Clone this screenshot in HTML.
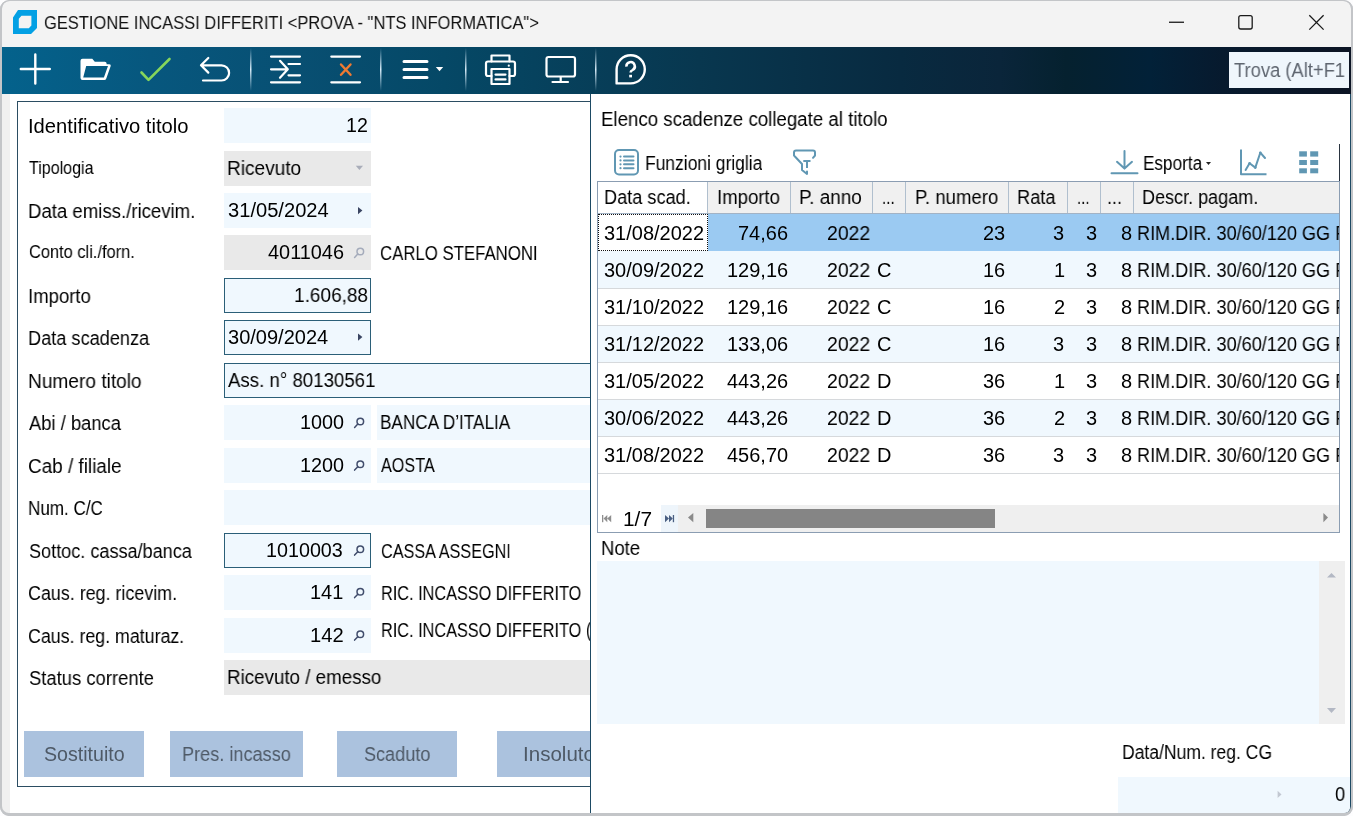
<!DOCTYPE html>
<html><head><meta charset="utf-8">
<style>
html,body{margin:0;padding:0;}
body{width:1353px;height:816px;position:relative;overflow:hidden;background:#fdfdfe;font-family:"Liberation Sans",sans-serif;color:#000;}
.a{position:absolute;}
.t{position:absolute;white-space:pre;transform-origin:0 0;display:block;will-change:transform;}
.clip{position:absolute;overflow:hidden;}
svg{position:absolute;overflow:visible;}
</style></head><body>
<!-- window frame -->
<div class="a" style="left:0;top:0;width:1353px;height:816px;background:#c3c5c8;border-radius:9px;"></div>
<div class="a" style="left:2px;top:1px;width:1349px;height:813px;background:#f3f3f3;border-radius:8px 8px 7px 7px;overflow:hidden;">
</div>
<!-- app icon -->
<svg style="left:0;top:0" width="60" height="46">
  <path d="M13 17.5 L18 10 L37 10 L37 28 L31 34 L13 34 Z M18.8 18.8 L18.8 28.3 L28.8 28.3 L31.4 25.6 L31.4 15.7 L21.5 15.7 Z" fill="#03a0e4" fill-rule="evenodd"/>
</svg>
<!-- window controls -->
<svg style="left:0;top:0" width="1353" height="46">
  <rect x="1169" y="21.6" width="15" height="1.3" fill="#1a1a1a"/>
  <rect x="1238.8" y="15.6" width="13.4" height="13.4" rx="2" fill="none" stroke="#1a1a1a" stroke-width="1.3"/>
  <path d="M1309.3 15.3 L1323.6 29.6 M1323.6 15.3 L1309.3 29.6" stroke="#1a1a1a" stroke-width="1.3"/>
</svg>
<!-- toolbar -->
<div class="a" style="left:2px;top:47px;width:1349px;height:47px;background:linear-gradient(90deg,#04628c 0%,#07577e 11%,#084f72 22.1%,#054866 32.8%,#08374f 51.7%,#082a40 66.6%,#0a253a 74%,#05212f 78.9%,#022138 85.1%,#071a2e 90.4%,#0c1424 100%);"></div>
<svg style="left:0;top:0" width="1353" height="100">
  <defs>
    <linearGradient id="sep" x1="0" y1="0" x2="0" y2="1">
      <stop offset="0" stop-color="#cfe6f5" stop-opacity="0"/>
      <stop offset="0.5" stop-color="#d8ecf8" stop-opacity="1"/>
      <stop offset="1" stop-color="#cfe6f5" stop-opacity="0"/>
    </linearGradient>
  </defs>
  <g fill="url(#sep)">
    <rect x="250" y="48" width="1.5" height="43"/>
    <rect x="380" y="48" width="1.5" height="43"/>
    <rect x="465" y="48" width="1.5" height="43"/>
    <rect x="595" y="48" width="1.5" height="43"/>
  </g>
  <g stroke="#fff" fill="none" stroke-width="2.2" stroke-linecap="round" stroke-linejoin="round">
    <!-- plus -->
    <path d="M35.3 54.5 V83.5 M20.8 69 H49.8" stroke-width="2.4"/>
    <!-- folder -->

    <!-- undo -->
    <path d="M208.3 58 L201 65.3 L208.3 72.6 M201.5 65.3 H221.5 A7.6 7.6 0 0 1 221.5 80.5 H203"/>
    <!-- indent -->
    <path d="M271 56.6 H300 M271 82.3 H300 M288.5 64 H300 M288.5 75.3 H300 M271 69.3 H287 M280 60.8 L287.8 69.3 L280 77.8"/>
    <!-- delete lines -->
    <path d="M331.3 56.6 H360 M331.3 82.3 H360"/>
    <!-- menu -->
    <path d="M404 61.5 H427 M404 69.6 H427 M404 77.5 H427" stroke-width="3"/>
    <!-- printer -->
    <path d="M491.5 61.5 V55.5 H509.5 V61.5"/>
    <path d="M491.5 76 H488 Q486 76 486 74 V63.5 Q486 61.5 488 61.5 H513 Q515 61.5 515 63.5 V74 Q515 76 513 76 H509.5"/>
    <path d="M491.5 69 H509.5 V84 H491.5 Z M495.5 74.6 H505.5 M495.5 79.4 H505.5"/>
    <!-- monitor -->
    <rect x="546.5" y="57" width="28.5" height="19.5" rx="2"/>
    <path d="M560.7 77 V82 M552.5 82 H568"/>
    <!-- help -->
    <path d="M616.6 83.4 V69.3 A14.1 14.1 0 1 1 630.7 83.4 Z" stroke-width="2.4"/>
    <path d="M626.4 66.6 A4.2 4.2 0 1 1 632.6 70 Q630.6 71 630.6 72.6" stroke-width="2.5" stroke-linecap="butt"/>
  </g>
  <circle cx="508.8" cy="65.7" r="1.1" fill="#fff"/>
  <path fill="#fff" fill-rule="evenodd" d="M80.5 60.8 Q80.5 58.8 82.5 58.8 L92.3 58.8 L94.8 61.7 L104.8 61.7 Q106.6 61.7 106.6 63.5 L106.6 64.2 L109.3 64.2 Q111.2 64.2 110.7 66 L106.3 78.6 Q105.8 80.1 104.3 80.1 L82.5 80.1 Q80.5 80.1 80.5 78.1 Z M86.2 66.1 L108 66.1 L103.9 77.6 L83.2 77.6 Z"/>
  <rect x="629.2" y="74.8" width="2.8" height="2.6" fill="#fff"/>
  <path d="M435.8 67 H443.2 L439.5 71.2 Z" fill="#fff"/>
  <path d="M141.5 72.5 L148.5 79.8 L169.5 59" stroke="#86d65b" stroke-width="2.6" fill="none" stroke-linecap="round" stroke-linejoin="round"/>
  <path d="M341 64.5 L350.5 74.8 M350.5 64.5 L341 74.8" stroke="#ef7a32" stroke-width="2.4" fill="none" stroke-linecap="round"/>
</svg>
<!-- Trova box -->
<div class="a" style="left:1229px;top:52px;width:120px;height:36px;background:#eff6fc;"></div>
<div class="clip" style="left:1229px;top:52px;width:116px;height:36px;"><div class="a" style="left:-1229px;top:-52px;width:1353px;height:816px;">
<span class="t" style="left:1233.50px;top:61px;font-size:19.6px;line-height:19.6px;transform:scaleX(0.9371);color:#5f6670;">Trova (Alt+F1)</span>
</div></div>

<!-- content area -->
<div class="a" style="left:2px;top:94px;width:8px;height:719px;background:#f0f0f0;"></div>
<div class="a" style="left:10px;top:94px;width:580px;height:719px;background:#fff;"></div>
<!-- group box -->
<div class="a" style="left:17px;top:101px;width:600px;height:686px;border:1px solid #2b4d62;box-sizing:border-box;"></div>

<!-- fields -->
<div id="fields">
<div class="a" style="left:224px;top:108px;width:147px;height:35px;background:#f0f8fe;"></div>
<div class="a" style="left:224px;top:151px;width:147px;height:35px;background:#e9e9e9;"></div>
<div class="a" style="left:224px;top:193px;width:147px;height:35px;background:#f0f8fe;"></div>
<div class="a" style="left:224px;top:235px;width:147px;height:35px;background:#e9e9e9;"></div>
<div class="a" style="left:224px;top:278px;width:147px;height:35px;background:#f0f8fe;border:1px solid #2b5f78;box-sizing:border-box;"></div>
<div class="a" style="left:224px;top:320px;width:147px;height:35px;background:#f0f8fe;border:1px solid #2b5f78;box-sizing:border-box;"></div>
<div class="a" style="left:224px;top:363px;width:400px;height:35px;background:#f0f8fe;border:1px solid #2b5f78;box-sizing:border-box;"></div>
<div class="a" style="left:224px;top:405px;width:147px;height:35px;background:#f0f8fe;"></div>
<div class="a" style="left:377px;top:405px;width:240px;height:35px;background:#f0f8fe;"></div>
<div class="a" style="left:224px;top:448px;width:147px;height:35px;background:#f0f8fe;"></div>
<div class="a" style="left:377px;top:448px;width:240px;height:35px;background:#f0f8fe;"></div>
<div class="a" style="left:224px;top:490px;width:400px;height:35px;background:#f0f8fe;"></div>
<div class="a" style="left:224px;top:533px;width:147px;height:35px;background:#f0f8fe;border:1px solid #2b5f78;box-sizing:border-box;"></div>
<div class="a" style="left:224px;top:575px;width:147px;height:35px;background:#f0f8fe;"></div>
<div class="a" style="left:224px;top:618px;width:147px;height:35px;background:#f0f8fe;"></div>
<div class="a" style="left:224px;top:660px;width:400px;height:35px;background:#e9e9e9;"></div>
</div>
<!-- buttons -->
<div class="a" style="left:24px;top:731px;width:120px;height:46px;background:#abc2de;"></div>
<div class="a" style="left:170px;top:731px;width:133px;height:46px;background:#abc2de;"></div>
<div class="a" style="left:337px;top:731px;width:120px;height:46px;background:#abc2de;"></div>
<div class="a" style="left:497px;top:731px;width:120px;height:46px;background:#abc2de;"></div>
<!-- field icons -->
<svg style="left:0;top:0" width="600" height="816">
  <path d="M355.8 165.8 H363 L359.4 170 Z" fill="#a9adb9"/>
  <path d="M358 207 L362.4 210.6 L358 214.2 Z" fill="#3a4562"/>
  <path d="M358 333.5 L362.4 337.1 L358 340.7 Z" fill="#3a4562"/>
  <g fill="none" stroke-width="1.5" stroke-linecap="round">
    <g stroke="#a4abbb"><circle cx="360.3" cy="251.5" r="3.3"/><path d="M357.8 254 L354.6 257.4"/></g>
    <g stroke="#414d6c">
      <circle cx="360.3" cy="421.5" r="3.3"/><path d="M357.8 424 L354.6 427.4"/>
      <circle cx="360.3" cy="464.2" r="3.3"/><path d="M357.8 466.7 L354.6 470.1"/>
      <circle cx="360.3" cy="549.2" r="3.3"/><path d="M357.8 551.7 L354.6 555.1"/>
      <circle cx="360.3" cy="591.7" r="3.3"/><path d="M357.8 594.2 L354.6 597.6"/>
      <circle cx="360.3" cy="634.2" r="3.3"/><path d="M357.8 636.7 L354.6 640.1"/>
    </g>
  </g>
</svg>
<div class="clip" style="left:0;top:94px;width:590px;height:719px;"><div class="a" style="left:0;top:-94px;width:1353px;height:816px;">
<span class="t" style="left:380.77px;top:621px;font-size:19.6px;line-height:19.6px;transform:scaleX(0.8302);">RIC. INCASSO DIFFERITO (</span>
<span class="t" style="left:522.95px;top:745px;font-size:19.6px;line-height:19.6px;transform:scaleX(1.0483);color:#4e5966;">Insoluto</span>
</div></div>

<!-- right panel -->
<div class="a" style="left:590px;top:94px;width:761px;height:720px;background:#fff;border-left:1px solid #1d4a64;border-bottom:1px solid #1d4a64;border-right:1px solid #1d4a64;box-sizing:border-box;border-bottom-right-radius:7px;"></div>
<!-- grid toolbar right line -->
<div class="a" style="left:1339px;top:144px;width:1px;height:37px;background:#2a3440;"></div>
<!-- grid -->
<div class="a" style="left:597px;top:181px;width:743px;height:352px;border:1px solid #8b9db2;box-sizing:border-box;background:#fff;"></div>
<!-- header -->
<div class="a" style="left:598px;top:182px;width:741px;height:32px;background:#f0f0f0;"></div>
<div class="a" style="left:598px;top:182px;width:110px;height:32px;background:#fff;"></div>
<svg style="left:0;top:0" width="1353" height="816">
  <g fill="#b0bfce">
    <rect x="707" y="182" width="1" height="32"/>
    <rect x="790" y="182" width="1" height="32"/>
    <rect x="872" y="182" width="1" height="32"/>
    <rect x="905" y="182" width="1" height="32"/>
    <rect x="1008" y="182" width="1" height="32"/>
    <rect x="1067" y="182" width="1" height="32"/>
    <rect x="1100" y="182" width="1" height="32"/>
    <rect x="1133" y="182" width="1" height="32"/>
    <rect x="598" y="213" width="741" height="1" fill="#a3b3c5"/>
  </g>
</svg>
<!-- rows -->
<div class="a" style="left:598px;top:214px;width:741px;height:37px;background:#9bcaf2;"></div>
<div class="a" style="left:598px;top:251px;width:741px;height:37px;background:#f0f8fe;"></div>
<div class="a" style="left:598px;top:325px;width:741px;height:37px;background:#f0f8fe;"></div>
<div class="a" style="left:598px;top:399px;width:741px;height:37px;background:#f0f8fe;"></div>
<svg style="left:0;top:0" width="1353" height="816">
  <g fill="#d6d9dc">
    <rect x="598" y="288" width="741" height="1"/>
    <rect x="598" y="325" width="741" height="1"/>
    <rect x="598" y="362" width="741" height="1"/>
    <rect x="598" y="399" width="741" height="1"/>
    <rect x="598" y="436" width="741" height="1"/>
    <rect x="598" y="473" width="741" height="1"/>
  </g>
</svg>
<div class="a" style="left:598px;top:214px;width:110px;height:37px;background:#fff;outline:1px dotted #111;outline-offset:-1px;"></div>
<div class="clip" style="left:598px;top:182px;width:741px;height:350px;"><div class="a" style="left:-598px;top:-182px;width:1353px;height:816px;">
<span class="t" style="left:1137.28px;top:224px;font-size:19.6px;line-height:19.6px;transform:scaleX(0.9239);">RIM.DIR. 30/60/120 GG FM</span>
<span class="t" style="left:1137.28px;top:261px;font-size:19.6px;line-height:19.6px;transform:scaleX(0.9239);">RIM.DIR. 30/60/120 GG FM</span>
<span class="t" style="left:1137.28px;top:298px;font-size:19.6px;line-height:19.6px;transform:scaleX(0.9239);">RIM.DIR. 30/60/120 GG FM</span>
<span class="t" style="left:1137.28px;top:335px;font-size:19.6px;line-height:19.6px;transform:scaleX(0.9239);">RIM.DIR. 30/60/120 GG FM</span>
<span class="t" style="left:1137.28px;top:372px;font-size:19.6px;line-height:19.6px;transform:scaleX(0.9239);">RIM.DIR. 30/60/120 GG FM</span>
<span class="t" style="left:1137.28px;top:409px;font-size:19.6px;line-height:19.6px;transform:scaleX(0.9239);">RIM.DIR. 30/60/120 GG FM</span>
<span class="t" style="left:1137.28px;top:446px;font-size:19.6px;line-height:19.6px;transform:scaleX(0.9239);">RIM.DIR. 30/60/120 GG FM</span>
</div></div>
<!-- pager / scrollbar -->
<div class="a" style="left:661px;top:505px;width:17px;height:27px;background:#eef5fb;"></div>
<div class="a" style="left:678px;top:505px;width:661px;height:27px;background:#efefef;"></div>
<div class="a" style="left:706px;top:509px;width:289px;height:19px;background:#858585;"></div>
<svg style="left:0;top:0" width="1353" height="816">
  <path d="M688 517.6 L693.3 513 V522.2 Z" fill="#8a8a8a"/>
  <path d="M1328 517.6 L1323.4 513 V522.2 Z" fill="#8a8a8a"/>
  <g fill="#8e8e8e"><rect x="602" y="515" width="1.3" height="7.2"/><path d="M603.5 518.6 L607.3 515 V522.2 Z M607.3 518.6 L611.2 515 V522.2 Z"/></g>
  <g fill="#4a5f82"><rect x="672.8" y="515" width="1.3" height="7.2"/><path d="M672.8 518.6 L669 515 V522.2 Z M669 518.6 L665 515 V522.2 Z"/></g>
</svg>
<!-- notes -->
<div class="a" style="left:597px;top:561px;width:748px;height:163px;background:#f0f8fe;"></div>
<div class="a" style="left:1319px;top:561px;width:26px;height:163px;background:#efefef;"></div>
<svg style="left:0;top:0" width="1353" height="816">
  <path d="M1327 577.5 H1336 L1331.5 573 Z" fill="#b3b8c4"/>
  <path d="M1327 708 H1336 L1331.5 713 Z" fill="#b3b8c4"/>
</svg>
<div class="a" style="left:1118px;top:777px;width:232px;height:36px;background:#f0f8fe;border-bottom-right-radius:6px;"></div>
<svg style="left:0;top:0" width="1353" height="816"><path d="M1277.6 790.7 L1281.5 794.4 L1277.6 798 Z" fill="#c2c8d2"/></svg>

<!-- grid toolbar icons -->
<svg style="left:0;top:0" width="1353" height="816">
  <g stroke="#6097b3" fill="none" stroke-width="2" stroke-linecap="round" stroke-linejoin="round">
    <rect x="615" y="150" width="23" height="24.5" rx="4"/>
    <path d="M624 156.6 H633.5 M624 160.4 H633.5 M624 164.3 H633.5 M624 168.2 H633.5"/>
    <path d="M794 155.5 V152.5 Q794 150.5 796 150.5 H813 Q815 150.5 815 152.5 V155.5 L813 157.8 M794 155.5 L802 164 V170 L807 174 V171.5"/>
    <path d="M803.3 161 H810.5 M807 161 V168" stroke-linecap="butt"/>
    <path d="M1124.5 151 V168 M1117 161.8 L1124.5 168.6 L1132 161.8 M1111.5 173.3 H1137.5"/>
    <path d="M1241 149.5 V174.3 H1266.5" stroke-linecap="butt"/>
    <path d="M1245.6 170 L1249.6 163.3 L1255.3 167.6 L1260.3 152.7 L1265 158"/>
  </g>
  <g fill="#6097b3">
    <circle cx="1249.6" cy="163.3" r="1.3"/><circle cx="1255.3" cy="167.6" r="1.3"/><circle cx="1260.3" cy="152.7" r="1.3"/>
    <circle cx="620.5" cy="156.6" r="1.1"/><circle cx="620.5" cy="160.4" r="1.1"/><circle cx="620.5" cy="164.3" r="1.1"/><circle cx="620.5" cy="168.2" r="1.1"/>
    <rect x="1299.2" y="151.3" width="7.7" height="5.3"/><rect x="1310.2" y="151.3" width="8" height="5.3"/>
    <rect x="1299.2" y="160" width="7.7" height="5"/><rect x="1310.2" y="160" width="8" height="5"/>
    <rect x="1299.2" y="168.3" width="7.7" height="5"/><rect x="1310.2" y="168.3" width="8" height="5"/>
  </g>
  <path d="M1206 162 H1211 L1208.5 165 Z" fill="#222"/>
</svg>

<span class="t" style="left:43.90px;top:14px;font-size:18.6px;line-height:18.6px;transform:scaleX(0.8868);color:#111;">GESTIONE INCASSI DIFFERITI &lt;PROVA - "NTS INFORMATICA"&gt;</span>
<span class="t" style="left:27.97px;top:117px;font-size:19.6px;line-height:19.6px;transform:scaleX(1.0307);">Identificativo titolo</span>
<span class="t" style="left:28.90px;top:159px;font-size:18.6px;line-height:18.6px;transform:scaleX(0.8631);">Tipologia</span>
<span class="t" style="left:28.05px;top:202px;font-size:19.6px;line-height:19.6px;transform:scaleX(0.9487);">Data emiss./ricevim.</span>
<span class="t" style="left:28.90px;top:243px;font-size:18.6px;line-height:18.6px;transform:scaleX(0.8828);">Conto cli./forn.</span>
<span class="t" style="left:28.05px;top:287px;font-size:19.6px;line-height:19.6px;transform:scaleX(0.9462);">Importo</span>
<span class="t" style="left:28.07px;top:329px;font-size:19.6px;line-height:19.6px;transform:scaleX(0.9275);">Data scadenza</span>
<span class="t" style="left:28.02px;top:372px;font-size:19.6px;line-height:19.6px;transform:scaleX(0.9756);">Numero titolo</span>
<span class="t" style="left:29.00px;top:414px;font-size:19.6px;line-height:19.6px;transform:scaleX(0.9374);">Abi / banca</span>
<span class="t" style="left:28.03px;top:457px;font-size:19.6px;line-height:19.6px;transform:scaleX(0.9653);">Cab / filiale</span>
<span class="t" style="left:28.13px;top:499px;font-size:19.6px;line-height:19.6px;transform:scaleX(0.8709);">Num. C/C</span>
<span class="t" style="left:29.00px;top:542px;font-size:19.6px;line-height:19.6px;transform:scaleX(0.9232);">Sottoc. cassa/banca</span>
<span class="t" style="left:28.09px;top:584px;font-size:19.6px;line-height:19.6px;transform:scaleX(0.9125);">Caus. reg. ricevim.</span>
<span class="t" style="left:28.09px;top:627px;font-size:19.6px;line-height:19.6px;transform:scaleX(0.9079);">Caus. reg. maturaz.</span>
<span class="t" style="left:29.00px;top:669px;font-size:19.6px;line-height:19.6px;transform:scaleX(0.9400);">Status corrente</span>
<span class="t" style="left:345.90px;top:116px;font-size:19.6px;line-height:19.6px;">12</span>
<span class="t" style="left:227.03px;top:159px;font-size:19.6px;line-height:19.6px;transform:scaleX(0.9730);">Ricevuto</span>
<span class="t" style="left:228.00px;top:201px;font-size:19.6px;line-height:19.6px;transform:scaleX(1.0268);">31/05/2024</span>
<span class="t" style="left:267.80px;top:243px;font-size:19.6px;line-height:19.6px;transform:scaleX(1.0156);">4011046</span>
<span class="t" style="left:380.34px;top:244px;font-size:19.6px;line-height:19.6px;transform:scaleX(0.8565);">CARLO STEFANONI</span>
<span class="t" style="left:293.63px;top:286px;font-size:19.6px;line-height:19.6px;transform:scaleX(0.9712);">1.606,88</span>
<span class="t" style="left:228.40px;top:328px;font-size:19.6px;line-height:19.6px;transform:scaleX(1.0217);">30/09/2024</span>
<span class="t" style="left:228.00px;top:371px;font-size:19.6px;line-height:19.6px;transform:scaleX(0.9519);">Ass. n° 80130561</span>
<span class="t" style="left:299.79px;top:413px;font-size:19.6px;line-height:19.6px;transform:scaleX(1.0096);">1000</span>
<span class="t" style="left:380.12px;top:413px;font-size:19.6px;line-height:19.6px;transform:scaleX(0.8750);">BANCA D’ITALIA</span>
<span class="t" style="left:299.79px;top:456px;font-size:19.6px;line-height:19.6px;transform:scaleX(1.0096);">1200</span>
<span class="t" style="left:380.80px;top:456px;font-size:19.6px;line-height:19.6px;transform:scaleX(0.8256);">AOSTA</span>
<span class="t" style="left:266.29px;top:541px;font-size:19.6px;line-height:19.6px;transform:scaleX(1.0069);">1010003</span>
<span class="t" style="left:380.77px;top:542px;font-size:19.6px;line-height:19.6px;transform:scaleX(0.8279);">CASSA ASSEGNI</span>
<span class="t" style="left:310.48px;top:583px;font-size:19.6px;line-height:19.6px;transform:scaleX(1.0164);">141</span>
<span class="t" style="left:380.77px;top:584px;font-size:19.6px;line-height:19.6px;transform:scaleX(0.8302);">RIC. INCASSO DIFFERITO</span>
<span class="t" style="left:310.47px;top:626px;font-size:19.6px;line-height:19.6px;transform:scaleX(1.0294);">142</span>
<span class="t" style="left:226.54px;top:668px;font-size:19.6px;line-height:19.6px;transform:scaleX(0.9577);">Ricevuto / emesso</span>
<span class="t" style="left:43.70px;top:745px;font-size:19.6px;line-height:19.6px;transform:scaleX(0.9976);color:#4e5966;">Sostituito</span>
<span class="t" style="left:181.57px;top:745px;font-size:19.6px;line-height:19.6px;transform:scaleX(0.9253);color:#4e5966;">Pres. incasso</span>
<span class="t" style="left:363.50px;top:745px;font-size:19.6px;line-height:19.6px;transform:scaleX(0.9236);color:#4e5966;">Scaduto</span>
<span class="t" style="left:601.05px;top:110px;font-size:19.6px;line-height:19.6px;transform:scaleX(0.9532);">Elenco scadenze collegate al titolo</span>
<span class="t" style="left:645.11px;top:154px;font-size:19.6px;line-height:19.6px;transform:scaleX(0.8901);">Funzioni griglia</span>
<span class="t" style="left:1143.13px;top:154px;font-size:19.6px;line-height:19.6px;transform:scaleX(0.8750);">Esporta</span>
<span class="t" style="left:604.07px;top:188px;font-size:19.6px;line-height:19.6px;transform:scaleX(0.9263);">Data scad.</span>
<span class="t" style="left:717.25px;top:188px;font-size:19.6px;line-height:19.6px;transform:scaleX(0.9477);">Importo</span>
<span class="t" style="left:799.43px;top:188px;font-size:19.6px;line-height:19.6px;transform:scaleX(0.9669);">P. anno</span>
<span class="t" style="left:882.03px;top:188px;font-size:19.6px;line-height:19.6px;transform:scaleX(0.7705);">...</span>
<span class="t" style="left:914.65px;top:188px;font-size:19.6px;line-height:19.6px;transform:scaleX(0.9475);">P. numero</span>
<span class="t" style="left:1017.37px;top:188px;font-size:19.6px;line-height:19.6px;transform:scaleX(0.9311);">Rata</span>
<span class="t" style="left:1076.74px;top:188px;font-size:19.6px;line-height:19.6px;transform:scaleX(0.7561);">...</span>
<span class="t" style="left:1107.49px;top:188px;font-size:19.6px;line-height:19.6px;transform:scaleX(0.9073);">...</span>
<span class="t" style="left:1142.08px;top:188px;font-size:19.6px;line-height:19.6px;transform:scaleX(0.9202);">Descr. pagam.</span>
<span class="t" style="left:603.80px;top:224px;font-size:19.6px;line-height:19.6px;transform:scaleX(1.0199);">31/08/2022</span>
<span class="t" style="left:738.09px;top:224px;font-size:19.6px;line-height:19.6px;transform:scaleX(1.0199);">74,66</span>
<span class="t" style="left:826.50px;top:224px;font-size:19.6px;line-height:19.6px;transform:scaleX(0.9885);">2022</span>
<span class="t" style="left:983.17px;top:224px;font-size:19.6px;line-height:19.6px;transform:scaleX(1.0199);">23</span>
<span class="t" style="left:1052.78px;top:224px;font-size:19.6px;line-height:19.6px;transform:scaleX(1.0199);">3</span>
<span class="t" style="left:1085.78px;top:224px;font-size:19.6px;line-height:19.6px;transform:scaleX(1.0199);">3</span>
<span class="t" style="left:1120.68px;top:224px;font-size:19.6px;line-height:19.6px;transform:scaleX(1.0199);">8</span>
<span class="t" style="left:603.80px;top:261px;font-size:19.6px;line-height:19.6px;transform:scaleX(1.0199);">30/09/2022</span>
<span class="t" style="left:726.97px;top:261px;font-size:19.6px;line-height:19.6px;transform:scaleX(1.0199);">129,16</span>
<span class="t" style="left:826.50px;top:261px;font-size:19.6px;line-height:19.6px;transform:scaleX(0.9885);">2022</span>
<span class="t" style="left:876.58px;top:261px;font-size:19.6px;line-height:19.6px;transform:scaleX(1.0199);">C</span>
<span class="t" style="left:983.17px;top:261px;font-size:19.6px;line-height:19.6px;transform:scaleX(1.0199);">16</span>
<span class="t" style="left:1053.80px;top:261px;font-size:19.6px;line-height:19.6px;transform:scaleX(1.0199);">1</span>
<span class="t" style="left:1085.78px;top:261px;font-size:19.6px;line-height:19.6px;transform:scaleX(1.0199);">3</span>
<span class="t" style="left:1120.68px;top:261px;font-size:19.6px;line-height:19.6px;transform:scaleX(1.0199);">8</span>
<span class="t" style="left:603.80px;top:298px;font-size:19.6px;line-height:19.6px;transform:scaleX(1.0199);">31/10/2022</span>
<span class="t" style="left:726.97px;top:298px;font-size:19.6px;line-height:19.6px;transform:scaleX(1.0199);">129,16</span>
<span class="t" style="left:826.50px;top:298px;font-size:19.6px;line-height:19.6px;transform:scaleX(0.9885);">2022</span>
<span class="t" style="left:876.58px;top:298px;font-size:19.6px;line-height:19.6px;transform:scaleX(1.0199);">C</span>
<span class="t" style="left:983.17px;top:298px;font-size:19.6px;line-height:19.6px;transform:scaleX(1.0199);">16</span>
<span class="t" style="left:1053.80px;top:298px;font-size:19.6px;line-height:19.6px;transform:scaleX(1.0199);">2</span>
<span class="t" style="left:1085.78px;top:298px;font-size:19.6px;line-height:19.6px;transform:scaleX(1.0199);">3</span>
<span class="t" style="left:1120.68px;top:298px;font-size:19.6px;line-height:19.6px;transform:scaleX(1.0199);">8</span>
<span class="t" style="left:603.80px;top:335px;font-size:19.6px;line-height:19.6px;transform:scaleX(1.0199);">31/12/2022</span>
<span class="t" style="left:726.97px;top:335px;font-size:19.6px;line-height:19.6px;transform:scaleX(1.0199);">133,06</span>
<span class="t" style="left:826.50px;top:335px;font-size:19.6px;line-height:19.6px;transform:scaleX(0.9885);">2022</span>
<span class="t" style="left:876.58px;top:335px;font-size:19.6px;line-height:19.6px;transform:scaleX(1.0199);">C</span>
<span class="t" style="left:983.17px;top:335px;font-size:19.6px;line-height:19.6px;transform:scaleX(1.0199);">16</span>
<span class="t" style="left:1052.78px;top:335px;font-size:19.6px;line-height:19.6px;transform:scaleX(1.0199);">3</span>
<span class="t" style="left:1085.78px;top:335px;font-size:19.6px;line-height:19.6px;transform:scaleX(1.0199);">3</span>
<span class="t" style="left:1120.68px;top:335px;font-size:19.6px;line-height:19.6px;transform:scaleX(1.0199);">8</span>
<span class="t" style="left:603.80px;top:372px;font-size:19.6px;line-height:19.6px;transform:scaleX(1.0199);">31/05/2022</span>
<span class="t" style="left:726.97px;top:372px;font-size:19.6px;line-height:19.6px;transform:scaleX(1.0199);">443,26</span>
<span class="t" style="left:826.50px;top:372px;font-size:19.6px;line-height:19.6px;transform:scaleX(0.9885);">2022</span>
<span class="t" style="left:876.58px;top:372px;font-size:19.6px;line-height:19.6px;transform:scaleX(1.0199);">D</span>
<span class="t" style="left:983.17px;top:372px;font-size:19.6px;line-height:19.6px;transform:scaleX(1.0199);">36</span>
<span class="t" style="left:1053.80px;top:372px;font-size:19.6px;line-height:19.6px;transform:scaleX(1.0199);">1</span>
<span class="t" style="left:1085.78px;top:372px;font-size:19.6px;line-height:19.6px;transform:scaleX(1.0199);">3</span>
<span class="t" style="left:1120.68px;top:372px;font-size:19.6px;line-height:19.6px;transform:scaleX(1.0199);">8</span>
<span class="t" style="left:603.80px;top:409px;font-size:19.6px;line-height:19.6px;transform:scaleX(1.0199);">30/06/2022</span>
<span class="t" style="left:726.97px;top:409px;font-size:19.6px;line-height:19.6px;transform:scaleX(1.0199);">443,26</span>
<span class="t" style="left:826.50px;top:409px;font-size:19.6px;line-height:19.6px;transform:scaleX(0.9885);">2022</span>
<span class="t" style="left:876.58px;top:409px;font-size:19.6px;line-height:19.6px;transform:scaleX(1.0199);">D</span>
<span class="t" style="left:983.17px;top:409px;font-size:19.6px;line-height:19.6px;transform:scaleX(1.0199);">36</span>
<span class="t" style="left:1053.80px;top:409px;font-size:19.6px;line-height:19.6px;transform:scaleX(1.0199);">2</span>
<span class="t" style="left:1085.78px;top:409px;font-size:19.6px;line-height:19.6px;transform:scaleX(1.0199);">3</span>
<span class="t" style="left:1120.68px;top:409px;font-size:19.6px;line-height:19.6px;transform:scaleX(1.0199);">8</span>
<span class="t" style="left:603.80px;top:446px;font-size:19.6px;line-height:19.6px;transform:scaleX(1.0199);">31/08/2022</span>
<span class="t" style="left:726.97px;top:446px;font-size:19.6px;line-height:19.6px;transform:scaleX(1.0199);">456,70</span>
<span class="t" style="left:826.50px;top:446px;font-size:19.6px;line-height:19.6px;transform:scaleX(0.9885);">2022</span>
<span class="t" style="left:876.58px;top:446px;font-size:19.6px;line-height:19.6px;transform:scaleX(1.0199);">D</span>
<span class="t" style="left:983.17px;top:446px;font-size:19.6px;line-height:19.6px;transform:scaleX(1.0199);">36</span>
<span class="t" style="left:1052.78px;top:446px;font-size:19.6px;line-height:19.6px;transform:scaleX(1.0199);">3</span>
<span class="t" style="left:1085.78px;top:446px;font-size:19.6px;line-height:19.6px;transform:scaleX(1.0199);">3</span>
<span class="t" style="left:1120.68px;top:446px;font-size:19.6px;line-height:19.6px;transform:scaleX(1.0199);">8</span>
<span class="t" style="left:622.93px;top:510px;font-size:19.6px;line-height:19.6px;transform:scaleX(1.0655);">1/7</span>
<span class="t" style="left:600.86px;top:539px;font-size:19.6px;line-height:19.6px;transform:scaleX(0.9434);">Note</span>
<span class="t" style="left:1122.11px;top:743px;font-size:19.6px;line-height:19.6px;transform:scaleX(0.8946);">Data/Num. reg. CG</span>
<span class="t" style="left:1334.60px;top:785px;font-size:19.6px;line-height:19.6px;transform:scaleX(0.9364);">0</span>
<svg style="left:0;top:0" width="1353" height="816">
  <path fill="#fdfdfe" fill-rule="evenodd" d="M0 0 H1353 V816 H0 Z M9 0 H1344 A9 9 0 0 1 1353 9 V807 A9 9 0 0 1 1344 816 H9 A9 9 0 0 1 0 807 V9 A9 9 0 0 1 9 0 Z"/>
  <path fill="#c3c5c8" fill-rule="evenodd" d="M9 0 H1344 A9 9 0 0 1 1353 9 V807 A9 9 0 0 1 1344 816 H9 A9 9 0 0 1 0 807 V9 A9 9 0 0 1 9 0 Z M9 1 H1344 A7 7 0 0 1 1351 8 V806 A7 7 0 0 1 1344 813 H9 A7 7 0 0 1 2 806 V8 A7 7 0 0 1 9 1 Z"/>
</svg>
</body></html>
